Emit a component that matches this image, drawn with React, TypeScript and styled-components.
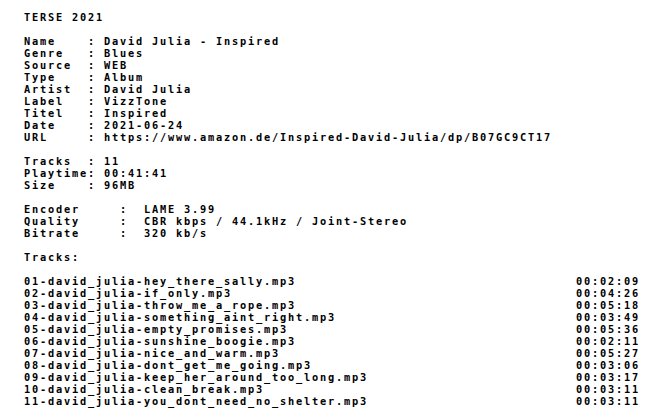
import React from "react";
import styled, { createGlobalStyle } from "styled-components";

const Global = createGlobalStyle`
  html, body { margin: 0; padding: 0; background: #ffffff; }
`;

const Page = styled.div`
  padding: 11px 0 0 24px;
  font-family: "DejaVu Sans Mono", "Liberation Mono", monospace;
  font-weight: bold;
  font-size: 10.3px;
  letter-spacing: 1.8px;
  line-height: 12px;
  color: #000000;
  white-space: pre;
`;

const Line = styled.div`
  height: 12px;
`;

const Block = styled.section`
  display: flex;
  flex-direction: column;
  margin-bottom: 12px;
`;

const Field = styled.div<{ $label: number; $sep: number }>`
  display: grid;
  grid-template-columns: ${(p) => p.$label}px ${(p) => p.$sep}px auto;
  height: 12px;
`;

const TrackRow = styled.div`
  display: grid;
  grid-template-columns: 552px auto;
  height: 12px;
`;

type KV = [string, string];

const release: KV[] = [
  ["Name", "David Julia - Inspired"],
  ["Genre", "Blues"],
  ["Source", "WEB"],
  ["Type", "Album"],
  ["Artist", "David Julia"],
  ["Label", "VizzTone"],
  ["Titel", "Inspired"],
  ["Date", "2021-06-24"],
  ["URL", "https://www.amazon.de/Inspired-David-Julia/dp/B07GC9CT17"],
];

const stats: KV[] = [
  ["Tracks", "11"],
  ["Playtime", "00:41:41"],
  ["Size", "96MB"],
];

const encoding: KV[] = [
  ["Encoder", "LAME 3.99"],
  ["Quality", "CBR kbps / 44.1kHz / Joint-Stereo"],
  ["Bitrate", "320 kb/s"],
];

const tracks: KV[] = [
  ["01-david_julia-hey_there_sally.mp3", "00:02:09"],
  ["02-david_julia-if_only.mp3", "00:04:26"],
  ["03-david_julia-throw_me_a_rope.mp3", "00:05:18"],
  ["04-david_julia-something_aint_right.mp3", "00:03:49"],
  ["05-david_julia-empty_promises.mp3", "00:05:36"],
  ["06-david_julia-sunshine_boogie.mp3", "00:02:11"],
  ["07-david_julia-nice_and_warm.mp3", "00:05:27"],
  ["08-david_julia-dont_get_me_going.mp3", "00:03:06"],
  ["09-david_julia-keep_her_around_too_long.mp3", "00:03:17"],
  ["10-david_julia-clean_break.mp3", "00:03:11"],
  ["11-david_julia-you_dont_need_no_shelter.mp3", "00:03:11"],
];

function Fields({ rows, label, sep }: { rows: KV[]; label: number; sep: number }) {
  return (
    <Block>
      {rows.map(([k, v]) => (
        <Field key={k} $label={label} $sep={sep}>
          <span>{k}</span>
          <span>:</span>
          <span>{v}</span>
        </Field>
      ))}
    </Block>
  );
}

export default function App() {
  return (
    <>
      <Global />
      <Page>
        <Block>
          <Line>TERSE 2021</Line>
        </Block>
        <Fields rows={release} label={64} sep={16} />
        <Fields rows={stats} label={64} sep={16} />
        <Fields rows={encoding} label={96} sep={24} />
        <Block>
          <Line>Tracks:</Line>
        </Block>
        <Block>
          {tracks.map(([f, t]) => (
            <TrackRow key={f}>
              <span>{f}</span>
              <span>{t}</span>
            </TrackRow>
          ))}
        </Block>
      </Page>
    </>
  );
}
